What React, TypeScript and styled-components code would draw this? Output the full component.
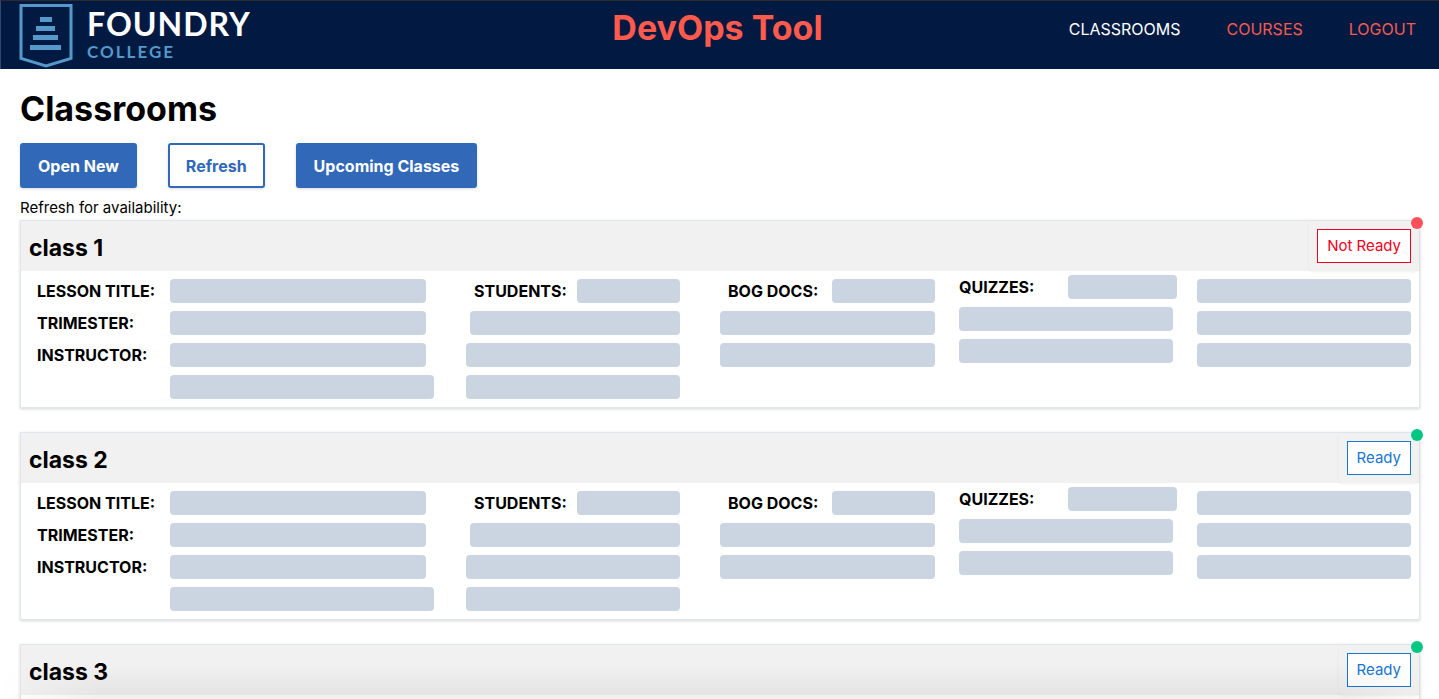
import React from 'react';
import styled, { createGlobalStyle, css } from 'styled-components';

const GlobalStyle = createGlobalStyle`
  *, *::before, *::after { box-sizing: border-box; }
  body {
    margin: 0;
    background: #fff;
    color: #000;
    font-family: Inter, 'Liberation Sans', sans-serif;
    font-size: 16px;
    line-height: 24px;
  }
  h1, h2, p { margin: 0; }
`;

const Header = styled.header`
  display: grid;
  grid-template-columns: 1fr auto 1fr;
  align-items: start;
  height: 69px;
  padding: 0 23px 0 18px;
  background: #021a42;
  border-top: 1px solid #2b2b2b;
  border-left: 1px solid #33486b;
`;

const Brand = styled.a`
  display: flex;
  gap: 14px;
  padding-top: 2px;
  text-decoration: none;
`;

const Shield = styled.svg`
  display: block;
  width: 54px;
  height: 65px;
`;

const Wordmark = styled.span`
  display: flex;
  flex-direction: column;
  padding-top: 5px;
  font-family: Lato, sans-serif;
  font-weight: 700;
`;

const WordmarkName = styled.span`
  color: #fff;
  font-size: 32px;
  line-height: 32px;
  letter-spacing: 1px;
`;

const WordmarkKind = styled.span`
  color: #5499c9;
  font-size: 17px;
  line-height: 24px;
  letter-spacing: 2px;
`;

const AppTitle = styled.div`
  padding-top: 5px;
  color: #ff5a4b;
  font-size: 34px;
  line-height: 44px;
  font-weight: 700;
`;

const Nav = styled.nav`
  display: flex;
  justify-content: flex-end;
  gap: 46px;
  padding-top: 16px;
`;

const NavLink = styled.a<{ $current?: boolean }>`
  color: ${(p) => (p.$current ? '#fff' : '#f45b50')};
  text-decoration: none;
`;

const Main = styled.main`
  padding: 16px 19px 24px 20px;
`;

const PageTitle = styled.h1`
  font-size: 34px;
  line-height: 48px;
  font-weight: 700;
`;

const Toolbar = styled.div`
  display: flex;
  gap: 31px;
  margin: 10px 0 8px;
`;

const Button = styled.button<{ $outline?: boolean }>`
  height: 45px;
  padding: 0 16px;
  border: 2px solid #3168b7;
  border-radius: 3px;
  background: #3168b7;
  color: #fff;
  font: inherit;
  font-weight: 700;
  box-shadow: 0 1px 3px rgba(0, 0, 0, 0.15);
  cursor: pointer;
  ${(p) =>
    p.$outline &&
    css`
      background: #fff;
      color: #3168b7;
    `}
`;

const Hint = styled.p`
  font-size: 15px;
`;

const CardList = styled.div`
  display: flex;
  flex-direction: column;
  gap: 24px;
`;

const Card = styled.article`
  position: relative;
  border: 1px solid #e0e6f1;
  background: #fff;
  box-shadow: 0 1px 3px rgba(0, 0, 0, 0.16);
`;

const StatusDot = styled.span<{ $ready: boolean }>`
  position: absolute;
  top: -4px;
  right: -4px;
  width: 12px;
  height: 12px;
  border-radius: 50%;
  background: ${(p) => (p.$ready ? '#00c781' : '#ff4f58')};
`;

const CardHeader = styled.header`
  display: flex;
  justify-content: space-between;
  align-items: center;
  padding-left: 8px;
  background: #f1f1f1;
`;

const CardTitle = styled.h2`
  padding-top: 4px;
  font-size: 23px;
  line-height: 32px;
  font-weight: 700;
`;

const StatusFrame = styled.div`
  padding: 8px;
  border-radius: 4px;
  box-shadow: 0 1px 3px rgba(0, 0, 0, 0.06);
`;

const StatusButton = styled.button<{ $ready: boolean }>`
  display: block;
  height: 34px;
  padding: 0 9px;
  border: 1px solid currentColor;
  background: #fff;
  color: ${(p) => (p.$ready ? '#1976d2' : '#f00022')};
  font: inherit;
  font-size: 15px;
  cursor: pointer;
`;

const CardBody = styled.div`
  display: grid;
  grid-template-columns:
    minmax(0, 405fr) minmax(0, 222fr) minmax(0, 231fr)
    minmax(0, 214fr) minmax(0, 214fr);
  column-gap: 24px;
  padding: 4px 8px 8px;
`;

const Column = styled.section<{ $indent?: number; $raised?: boolean }>`
  display: flex;
  flex-direction: column;
  gap: 8px;
  padding-top: ${(p) => (p.$raised ? 0 : 4)}px;
  padding-left: ${(p) => p.$indent ?? 0}px;
`;

const DetailRow = styled.div<{ $wide?: boolean }>`
  display: grid;
  grid-template-columns: 133px minmax(0, 1fr);
  padding-left: 8px;
  padding-right: ${(p) => (p.$wide ? 0 : 8)}px;
`;

const CountRow = styled.div<{ $flush?: boolean }>`
  display: grid;
  grid-template-columns: 1fr 1fr;
  ${(p) => (p.$flush ? 'margin-right: -4px;' : 'padding-left: 8px;')}
`;

const Label = styled.span`
  font-weight: 700;
  white-space: nowrap;
`;

const Bar = styled.div<{ $inset?: boolean }>`
  height: 24px;
  margin-left: ${(p) => (p.$inset ? 4 : 0)}px;
  border-radius: 4px;
  background: #cbd5e1;
`;

const BottomShade = styled.div`
  position: fixed;
  inset: auto 0 0;
  height: 36px;
  background: linear-gradient(to bottom, transparent, rgba(0, 0, 0, 0.06));
  mask-image: linear-gradient(to right, transparent, #000 100px, #000 calc(100% - 100px), transparent);
  pointer-events: none;
`;

const classrooms = [
  { name: 'class 1', ready: false },
  { name: 'class 2', ready: true },
  { name: 'class 3', ready: true },
];

function Logo() {
  return (
    <Brand href="#" aria-label="Foundry College">
      <Shield viewBox="0 0 54 65" fill="none" aria-hidden="true">
        <path d="M2 2.5H52V55.5L27 63L2 55.5Z" stroke="#5499c9" strokeWidth="3" />
        <path
          d="M21 14h12v5H21zM17 23h19v5H17zM14 32h25v5H14zM11 42h31v5H11z"
          fill="#5499c9"
        />
      </Shield>
      <Wordmark>
        <WordmarkName>FOUNDRY</WordmarkName>
        <WordmarkKind>COLLEGE</WordmarkKind>
      </Wordmark>
    </Brand>
  );
}

function ClassroomCard({ name, ready }: { name: string; ready: boolean }) {
  return (
    <Card>
      <CardHeader>
        <CardTitle>{name}</CardTitle>
        <StatusFrame>
          <StatusButton type="button" $ready={ready}>
            {ready ? 'Ready' : 'Not Ready'}
          </StatusButton>
        </StatusFrame>
      </CardHeader>
      <StatusDot $ready={ready} />
      <CardBody>
        <Column>
          {['LESSON TITLE:', 'TRIMESTER:', 'INSTRUCTOR:'].map((label) => (
            <DetailRow key={label}>
              <Label>{label}</Label>
              <Bar />
            </DetailRow>
          ))}
          <DetailRow $wide>
            <span />
            <Bar />
          </DetailRow>
        </Column>
        <Column $indent={8}>
          <CountRow>
            <Label>STUDENTS:</Label>
            <Bar />
          </CountRow>
          <Bar $inset />
          <Bar />
          <Bar />
        </Column>
        <Column $indent={16}>
          <CountRow>
            <Label>BOG DOCS:</Label>
            <Bar />
          </CountRow>
          <Bar />
          <Bar />
        </Column>
        <Column $raised>
          <CountRow $flush>
            <Label>QUIZZES:</Label>
            <Bar />
          </CountRow>
          <Bar />
          <Bar />
        </Column>
        <Column>
          <Bar />
          <Bar />
          <Bar />
        </Column>
      </CardBody>
    </Card>
  );
}

export default function App() {
  return (
    <>
      <GlobalStyle />
      <Header>
        <Logo />
        <AppTitle>DevOps Tool</AppTitle>
        <Nav>
          <NavLink href="#classrooms" $current>CLASSROOMS</NavLink>
          <NavLink href="#courses">COURSES</NavLink>
          <NavLink href="#logout">LOGOUT</NavLink>
        </Nav>
      </Header>
      <Main>
        <PageTitle>Classrooms</PageTitle>
        <Toolbar>
          <Button type="button">Open New</Button>
          <Button type="button" $outline>Refresh</Button>
          <Button type="button">Upcoming Classes</Button>
        </Toolbar>
        <Hint>Refresh for availability:</Hint>
        <CardList>
          {classrooms.map((c) => (
            <ClassroomCard key={c.name} {...c} />
          ))}
        </CardList>
      </Main>
      <BottomShade />
    </>
  );
}
